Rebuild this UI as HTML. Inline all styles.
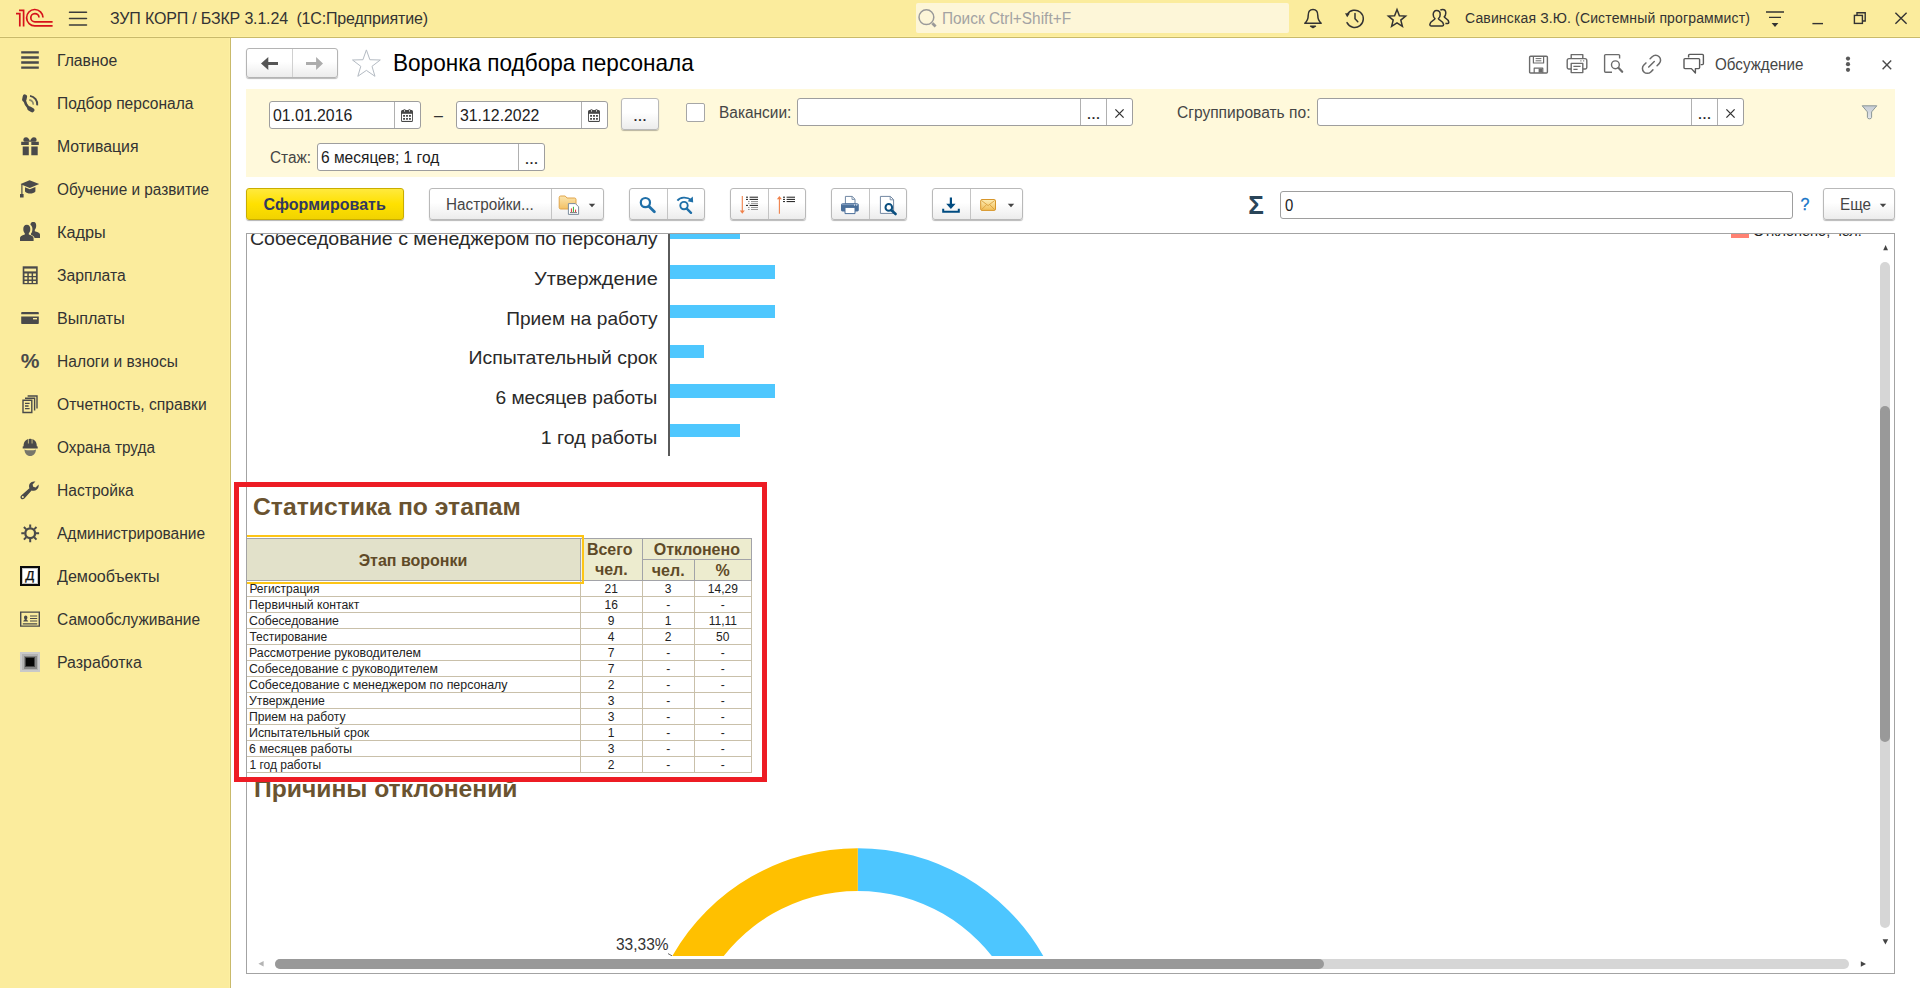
<!DOCTYPE html>
<html lang="ru">
<head>
<meta charset="utf-8">
<title>Воронка подбора персонала</title>
<style>
*{box-sizing:border-box;margin:0;padding:0}
html,body{width:1920px;height:988px;overflow:hidden;background:#fff}
body{font-family:"Liberation Sans",sans-serif;font-size:16px;color:#333;position:relative}
.abs{position:absolute}
#topbar{position:absolute;left:0;top:0;width:1920px;height:38px;background:#fbec9d;border-bottom:1px solid #c9ba6b;box-shadow:inset 0 -1px 0 #fef0a2}
#sidebar{position:absolute;left:0;top:38px;width:231px;height:950px;background:#fbec9d;border-right:1px solid #c9ba6b;box-shadow:inset -1px 0 0 #fef0a2}
.t{position:absolute;white-space:nowrap;line-height:20px;transform-origin:0 0}
.nav{position:absolute;left:57px;transform-origin:0 0;white-space:nowrap;line-height:20px;font-size:16px;color:#333}
.ico{position:absolute;left:20px;width:20px;height:20px}
.inp{position:absolute;background:#fff;border:1px solid #9e9e9e;border-radius:3px}
.btn{position:absolute;border:1px solid #b9b9b9;border-radius:3px;background:linear-gradient(#ffffff 0%,#ffffff 45%,#ececec 100%);box-shadow:0 1px 1px rgba(0,0,0,.28)}
.sep{position:absolute;width:1px;background:#c4c4c4}
.cl{position:absolute;right:1221.6px;white-space:nowrap;font-size:19px;line-height:28px;color:#2a2a2a;transform-origin:100% 0}
.h1{position:absolute;white-space:nowrap;font-size:24px;font-weight:bold;line-height:30px;color:#6a5330;transform:scaleX(1.02);transform-origin:0 0}
.th{position:absolute;width:120px;text-align:center;white-space:nowrap;font-size:16px;font-weight:bold;line-height:20px;color:#5f4a27}
.td{position:absolute;white-space:nowrap;font-size:12px;line-height:14px;color:#222;transform-origin:0 0}
.tn{position:absolute;width:50px;text-align:center;white-space:nowrap;font-size:12px;line-height:14px;color:#222}
</style>
</head>
<body>
<!-- TOP BAR -->
<div id="topbar">
<svg class="abs" style="left:14px;top:6px" width="42" height="24" viewBox="14 6 42 24" fill="none" stroke="#d6121b" stroke-width="1.7">
<path d="M16 13.6H19.8V26.6M19 10.3H23.6V26.6"/>
<path d="M43 17.6A8.2 8.2 0 1 0 35 25.9H52.6" stroke-linecap="butt"/>
<path d="M39 17.6A4.1 4.1 0 1 0 35 21.8H52.6"/>
</svg>
<svg class="abs" style="left:68px;top:10px" width="20" height="17" viewBox="0 0 20 17" stroke="#3b3b3b" stroke-width="1.5" stroke-linecap="round"><path d="M1.5 2.3H18.5M1.5 8.6H18.5M1.5 14.9H18.5"/></svg>
<div class="t" style="left:110px;top:9px;font-size:16px;letter-spacing:-0.17px;color:#333;white-space:pre">ЗУП КОРП / БЗКР 3.1.24  (1С:Предприятие)</div>
<div class="abs" style="left:916px;top:3px;width:373px;height:30px;background:#fdf6d8;border-radius:2px"></div>
<svg class="abs" style="left:917px;top:7px" width="22" height="22" viewBox="0 0 22 22" fill="none" stroke="#9a9a9a" stroke-width="1.5"><circle cx="9.4" cy="10.2" r="7.4"/><path d="M15.4 16.2L18.6 19.4" stroke-width="2.8"/></svg>
<div class="t" style="left:942px;top:9px;font-size:16px;transform:scaleX(.962);color:#a3a3a3">Поиск Ctrl+Shift+F</div>
<!-- bell -->
<svg class="abs" style="left:1302px;top:7px" width="22" height="23" viewBox="0 0 22 23" fill="none" stroke="#333" stroke-width="1.5" stroke-linejoin="round"><path d="M11 2.6C7.6 2.6 6.2 5.4 6.2 8.4C6.2 12.6 4.6 14.6 2.8 16.2H19.2C17.4 14.6 15.8 12.6 15.8 8.4C15.8 5.4 14.4 2.6 11 2.6Z"/><path d="M8.6 19.2H13.4L11 20.6Z" fill="#333"/></svg>
<!-- history -->
<svg class="abs" style="left:1343px;top:7px" width="24" height="23" viewBox="0 0 24 23" fill="none" stroke="#333" stroke-width="1.5"><path d="M4.2 7.6A8.6 8.6 0 1 1 4 15.6" stroke-linecap="round"/><path d="M12 6.4V11.8L14.8 14.8" stroke-linecap="round"/><path d="M2 6.2L6.8 6.4L4.2 10.2Z" fill="#333" stroke="none"/></svg>
<!-- star -->
<svg class="abs" style="left:1386px;top:7px" width="22" height="22" viewBox="0 0 22 22" fill="none" stroke="#333" stroke-width="1.5" stroke-linejoin="miter"><path d="M11 2.6L13.4 8.7L19.6 9.1L14.8 13.1L16.4 19.4L11 15.9L5.6 19.4L7.2 13.1L2.4 9.1L8.6 8.7Z"/></svg>
<!-- users -->
<svg class="abs" style="left:1428px;top:7px" width="23" height="22" viewBox="0 0 23 22" fill="none" stroke="#333" stroke-width="1.5" stroke-linejoin="round"><path d="M8.6 3.6C6.4 3.6 5.2 5.2 5.2 7.4C5.2 9.4 6 10.8 7 11.6C7 13.4 2 13.8 1.8 17.6C1.8 18.6 2.2 19 3 19H14.4C15.2 19 15.6 18.6 15.6 17.6C15.4 13.8 10.4 13.4 10.4 11.6C11.4 10.8 12.2 9.4 12.2 7.4C12.2 5.2 10.8 3.6 8.6 3.6Z"/><path d="M12.4 3.2C13 2.6 13.8 2.4 14.6 2.4C16.6 2.4 17.8 4 17.8 6C17.8 7.8 17.2 9 16.2 9.8C16.2 11.4 20.6 11.8 20.8 15.2C20.8 16 20.4 16.4 19.8 16.4H17.4"/></svg>
<div class="t" style="left:1465px;top:8px;font-size:14px;letter-spacing:0.14px;color:#333">Савинская З.Ю. (Системный программист)</div>
<!-- lines -->
<svg class="abs" style="left:1764px;top:9px" width="22" height="20" viewBox="0 0 22 20" fill="none" stroke="#333" stroke-width="1.4"><path d="M2 3H20M5 8.4H17"/><path d="M7.6 14L11 18L14.4 14Z" fill="#333" stroke="none"/></svg>
<svg class="abs" style="left:1810px;top:10px" width="16" height="16" viewBox="0 0 16 16" fill="none" stroke="#333" stroke-width="1.4"><path d="M2.4 13.6H13"/></svg>
<svg class="abs" style="left:1852px;top:10px" width="16" height="16" viewBox="0 0 16 16" fill="none" stroke="#333" stroke-width="1.4"><rect x="2.4" y="5.4" width="8" height="8" /><path d="M5 5.4V2.8H13.2V11H10.4"/></svg>
<svg class="abs" style="left:1893px;top:10px" width="16" height="16" viewBox="0 0 16 16" fill="none" stroke="#333" stroke-width="1.4"><path d="M2.4 2.8L13.6 13.8M13.6 2.8L2.4 13.8"/></svg>
</div>
<!-- SIDEBAR -->
<div id="sidebar">
<svg class="ico" style="top:12px" viewBox="0 0 20 20"><path d="M1.2 2.4H18.8M1.2 7.5H18.8M1.2 12.5H18.8M1.2 17.6H18.8" stroke="#4a4a4a" stroke-width="2.3" fill="none"/></svg>
<div class="nav" style="top:13px;transform:scaleX(0.984)">Главное</div>
<svg class="ico" style="top:55px" viewBox="0 0 20 20"><path d="M4.6 3.4C3.6 8.6 7 14.8 12 17.4" stroke="#4a4a4a" stroke-width="2.6" fill="none" stroke-linecap="round"/><path d="M4.9 3.6L4.3 6.6M9.6 15.6L12.2 17.2" stroke="#4a4a4a" stroke-width="4.4" fill="none" stroke-linecap="round"/><path d="M10 2.9A8.4 8.4 0 0 1 17.2 12.4" stroke="#4a4a4a" stroke-width="1.9" fill="none"/><path d="M9.2 6.8A4.6 4.6 0 0 1 13.2 11.6" stroke="#8c8a6c" stroke-width="1.7" fill="none"/></svg>
<div class="nav" style="top:56px;transform:scaleX(0.973)">Подбор персонала</div>
<svg class="ico" style="top:98px" viewBox="0 0 20 20"><path d="M1.2 5.7H8.8V9.1H1.2ZM11.3 5.7H18.8V9.1H11.3ZM2.7 10.5H8.8V19.2H2.7ZM11.3 10.5H17.7V19.2H11.3Z" fill="#4a4a4a"/><path d="M9.6 5.7H4.6C2.6 4.8 3 1.2 6 1.2C8 1.2 9.4 3.4 10 5.2C10.6 3.4 12 1.2 14 1.2C17 1.2 17.4 4.8 15.4 5.7H10.4Z" fill="#4a4a4a"/></svg>
<div class="nav" style="top:99px;transform:scaleX(0.99)">Мотивация</div>
<svg class="ico" style="top:141px" viewBox="0 0 20 20"><path d="M9.6 1.2L19.2 5L9.8 9L2.5 6V15H3.6V18.5H0V15H1.3V5.6L0.6 5Z" fill="#4a4a4a"/><path d="M5 8.3L9.8 10.3L15.4 8V12.4C14.2 13.9 12.2 14.5 10.2 14.5C8.2 14.5 6.2 13.9 5 12.4Z" fill="#4a4a4a"/></svg>
<div class="nav" style="top:142px;transform:scaleX(0.959)">Обучение и развитие</div>
<svg class="ico" style="top:184px" viewBox="0 0 20 20"><path d="M13.2 -0.2C15.2 -0.2 16.2 1.4 16.2 3.6C16.2 5.6 15.6 7 14.8 7.8V9.2C16.6 9.8 19.6 10.2 20 12.4V16H14.6C14.2 14.4 12.4 13.4 11 12.8V11.6C12 10.4 12.4 8.8 12.4 7C12.4 5 11.6 3.6 10.4 2.8C10.6 0.8 11.6 -0.2 13.2 -0.2Z" fill="#4a4a4a"/><path d="M6.8 2.7C9.2 2.7 10.3 4.5 10.3 6.9C10.3 8.9 9.7 10.4 8.8 11.3V12.6C10.4 13.4 13.4 13.6 13.6 16.4V18.9H0V16.4C0.2 13.6 3.2 13.4 4.8 12.6V11.3C3.9 10.4 3.3 8.9 3.3 6.9C3.3 4.5 4.4 2.7 6.8 2.7Z" fill="#4a4a4a"/></svg>
<div class="nav" style="top:185px;transform:scaleX(1.017)">Кадры</div>
<svg class="ico" style="top:227px" viewBox="0 0 20 20"><path d="M2.7 1.3H17.7V19.2H2.7Z" fill="#4a4a4a"/><path d="M4.3 3.6H16.1V6.4H4.3Z" fill="#fbec9d"/><path d="M4.5 8.6H7.3V10.9H4.5ZM8.8 8.6H11.6V10.9H8.8ZM13.1 8.6H15.9V10.9H13.1ZM4.5 12.3H7.3V14.6H4.5ZM8.8 12.3H11.6V14.6H8.8ZM13.1 12.3H15.9V14.6H13.1ZM4.5 16H7.3V17.9H4.5ZM8.8 16H11.6V17.9H8.8ZM13.1 16H15.9V17.9H13.1Z" fill="#fbec9d"/></svg>
<div class="nav" style="top:228px;transform:scaleX(0.981)">Зарплата</div>
<svg class="ico" style="top:270px" viewBox="0 0 20 20"><path d="M1.2 4.9C1.2 4.3 1.6 3.9 2.2 3.9H17.8C18.4 3.9 18.8 4.3 18.8 4.9V6.2H1.2ZM1.2 8.5H18.8V14.9C18.8 15.5 18.4 15.9 17.8 15.9H2.2C1.6 15.9 1.2 15.5 1.2 14.9Z" fill="#4a4a4a"/><path d="M13 10H17V11.4H13Z" fill="#fbec9d"/></svg>
<div class="nav" style="top:271px;transform:scaleX(1.003)">Выплаты</div>
<div class="t" style="left:20px;top:312px;width:20px;text-align:center;font-size:21px;font-weight:bold;line-height:22px;color:#4a4a4a">%</div>
<div class="nav" style="top:314px;transform:scaleX(0.972)">Налоги и взносы</div>
<svg class="ico" style="top:356px" viewBox="0 0 20 20"><path d="M7.6 2H17V14.4M5 4.2H14.6V16.6" stroke="#4a4a4a" stroke-width="1.4" fill="none"/><path d="M3 6.2H11.8V18.5H3Z" stroke="#4a4a4a" stroke-width="1.4" fill="none"/><path d="M5 9.3H9.6M5 12H8.6M5 14.6H9.6" stroke="#4a4a4a" stroke-width="1.3"/></svg>
<div class="nav" style="top:357px;transform:scaleX(0.978)">Отчетность, справки</div>
<svg class="ico" style="top:399px" viewBox="0 0 20 20"><path d="M3.6 9.2C3.6 4.6 6.2 1.8 10.2 1.8C14.2 1.8 16.8 4.6 16.8 9.2L17.7 9.6V11.4H2.7V9.6Z" fill="#4a4a4a"/><path d="M7.9 1.6H8.8V6.4H7.9ZM11.6 1.6H12.5V6.4H11.6Z" fill="#fbec9d" opacity=".75"/><path d="M4.4 12.4C7.4 13.6 13 13.6 16 12.4C15.8 16.2 13.4 19 10.2 19C7 19 4.6 16.2 4.4 12.4Z" fill="#77766a"/></svg>
<div class="nav" style="top:400px;transform:scaleX(0.961)">Охрана труда</div>
<svg class="ico" style="top:442px" viewBox="0 0 20 20"><path d="M18.6 4.4L15.6 7.4L13.2 6.8L12.6 4.4L15.4 1.6C13.4 1 11.2 1.6 9.9 3.4C8.9 4.8 8.8 6.6 9.4 8.2L1.2 15.4C0.2 16.3 0.2 17.8 1.1 18.7C2 19.6 3.5 19.5 4.4 18.5L11.6 10.6C13.2 11.2 15.2 10.8 16.8 9.4C18.4 8 19 6.2 18.6 4.4Z" fill="#4a4a4a"/><circle cx="2.8" cy="17" r="1" fill="#fbec9d"/></svg>
<div class="nav" style="top:443px;transform:scaleX(0.975)">Настройка</div>
<svg class="ico" style="top:485px" viewBox="0 0 20 20"><circle cx="10.2" cy="10.3" r="4.9" fill="none" stroke="#4a4a4a" stroke-width="2.3"/><path d="M15.80 10.30L19.10 10.30M14.16 14.26L16.49 16.59M10.20 15.90L10.20 19.20M6.24 14.26L3.91 16.59M4.60 10.30L1.30 10.30M6.24 6.34L3.91 4.01M10.20 4.70L10.20 1.40M14.16 6.34L16.49 4.01" stroke="#4a4a4a" stroke-width="2" fill="none"/></svg>
<div class="nav" style="top:486px;transform:scaleX(0.971)">Администрирование</div>
<div class="abs" style="left:20px;top:528px;width:20px;height:20px;border:2px solid #0a0a0a;background:#fff;box-shadow:inset 0 0 0 1px #c4c4c4"></div><div class="t" style="left:20px;top:527.5px;width:20px;text-align:center;font-size:13px;line-height:20px;color:#111;-webkit-text-stroke:.3px #111;transform:skewX(-5deg);transform-origin:50% 50%">Д</div>
<div class="nav" style="top:529px;transform:scaleX(1.006)">Демообъекты</div>
<svg class="ico" style="top:571px" viewBox="0 0 20 20"><path d="M0.7 3.1H19.3V17.1H0.7Z" fill="none" stroke="#4a4a4a" stroke-width="1.4"/><path d="M3.2 12.4C3.4 11 4.6 11.2 4.8 10.4C4.2 9.8 4 9.2 4 8.4C4 7.2 4.7 6.4 5.7 6.4C6.7 6.4 7.4 7.2 7.4 8.4C7.4 9.2 7.2 9.8 6.6 10.4C6.8 11.2 8 11 8.2 12.4Z" fill="#4a4a4a"/><path d="M10 7H17.2M10 9.5H17.2M10 12H17.2M2.8 14.8H17.2" stroke="#4a4a4a" stroke-width="1.2"/></svg>
<div class="nav" style="top:572px;transform:scaleX(0.97)">Самообслуживание</div>
<div class="abs" style="left:20px;top:614px;width:20px;height:20px;background:#c9c9c9"></div><div class="abs" style="left:22px;top:616px;width:16px;height:16px;background:#b2b2b2"></div><div class="abs" style="left:23.5px;top:617.5px;width:13px;height:13px;background:#858585"></div><div class="abs" style="left:25px;top:619px;width:10px;height:10px;background:#454545"></div><div class="abs" style="left:26px;top:620px;width:8px;height:8px;background:#060606"></div>
<div class="nav" style="top:615px;transform:scaleX(0.994)">Разработка</div>
</div>
<!-- CONTENT HEADER -->
<div id="content">
<div class="btn" style="left:246px;top:48px;width:92px;height:30px;border-color:#b4b4b4"></div>
<div class="sep" style="left:292px;top:49px;height:28px;background:#d0d0d0"></div>
<svg class="abs" style="left:256px;top:54px" width="28" height="20" viewBox="256 54 28 20"><path d="M261 63.5L268.3 57.1V62H278V65H268.3V69.9Z" fill="#555"/></svg>
<svg class="abs" style="left:300px;top:54px" width="28" height="20" viewBox="300 54 28 20"><path d="M323 63.5L316.1 57.1V62H306V65H316.1V69.9Z" fill="#acacac"/></svg>
<svg class="abs" style="left:348px;top:46px" width="38" height="36" viewBox="348 46 38 36" fill="none" stroke="#b4bbc3" stroke-width="1"><path d="M366.40 49.90L369.87 59.73L380.29 59.99L372.01 66.32L374.98 76.31L366.40 70.40L357.82 76.31L360.79 66.32L352.51 59.99L362.93 59.73Z"/></svg>
<div class="t" style="left:393px;top:49px;font-size:24px;line-height:28px;color:#000;transform:scaleX(.94)">Воронка подбора персонала</div>
<!-- header right icons -->
<svg class="abs" style="left:1527px;top:53px" width="23" height="23" viewBox="0 0 23 23" fill="none" stroke="#6b6b6b" stroke-width="1.4" stroke-linejoin="round"><path d="M2.6 4.2C2.6 3.6 3 3.2 3.6 3.2H19.4C20 3.2 20.4 3.6 20.4 4.2V19C20.4 19.6 20 20 19.4 20H3.6C3 20 2.6 19.6 2.6 19Z"/><path d="M6.4 3.4V10H16.6V3.4" stroke-width="1.2"/><path d="M8.6 5.6H14.4M8.6 7.8H14.4" stroke-width="1"/><path d="M7.2 20V15.2H15.8V20" stroke-width="1.2"/><path d="M11.6 15.6H15.2V19.6H11.6Z" fill="#6b6b6b" stroke="none"/></svg>
<svg class="abs" style="left:1565px;top:52px" width="24" height="23" viewBox="0 0 24 23" fill="none" stroke="#6b6b6b" stroke-width="1.4" stroke-linejoin="round"><path d="M6.2 6.6V2.6H17.8V6.6"/><path d="M6 17H3.6C2.8 17 2.2 16.4 2.2 15.6V8.4C2.2 7.4 3 6.6 4 6.6H20C21 6.6 21.8 7.4 21.8 8.4V15.6C21.8 16.4 21.2 17 20.4 17H18"/><path d="M6.2 11.4H17.8V20.6H6.2Z"/><path d="M8.4 14.4H15.6M8.4 17.4H12.6" stroke-width="1.2"/><path d="M15.4 8.8H16.4M18.2 8.8H19.2" stroke-width="1.2"/></svg>
<svg class="abs" style="left:1602px;top:52px" width="23" height="23" viewBox="0 0 23 23" fill="none" stroke="#6b6b6b" stroke-width="1.4" stroke-linejoin="round"><path d="M17.6 6.4V3.6C17.6 3 17.2 2.6 16.6 2.6H3.6C3 2.6 2.6 3 2.6 3.6V19.2C2.6 19.8 3 20.2 3.6 20.2H10"/><circle cx="13.4" cy="12.8" r="3.9"/><path d="M16.4 15.8L20.2 19.8" stroke-width="2.2" stroke-linecap="round"/></svg>
<svg class="abs" style="left:1640px;top:53px" width="23" height="23" viewBox="1640 53 23 23" fill="none" stroke="#6b6b6b" stroke-width="1.55" stroke-linecap="round"><g transform="translate(1651.5,64.3) rotate(-45) scale(.98) translate(-12,-12)"><path d="M15 7h3a5 5 0 0 1 0 10h-3"/><path d="M9 17H6a5 5 0 0 1 0-10h3"/><path d="M8 12H16"/></g></svg>
<svg class="abs" style="left:1682px;top:52px" width="24" height="24" viewBox="0 0 24 24" fill="none" stroke="#5a5a5a" stroke-width="1.4" stroke-linejoin="round"><path d="M6.6 5.6V3.4C6.6 2.8 7 2.4 7.6 2.4H20.4C21 2.4 21.4 2.8 21.4 3.4V11.6C21.4 12.2 21 12.6 20.4 12.6H18.6"/><path d="M3 6.6H16.6C17.2 6.6 17.6 7 17.6 7.6V15.6C17.6 16.2 17.2 16.6 16.6 16.6H13.4V21L9.4 16.6H3C2.4 16.6 2 16.2 2 15.6V7.6C2 7 2.4 6.6 3 6.6Z"/></svg>
<div class="t" style="left:1715px;top:55px;font-size:16px;transform:scaleX(.948);color:#454545">Обсуждение</div>
<svg class="abs" style="left:1843px;top:55px" width="10" height="18" viewBox="0 0 10 18" fill="#595959"><circle cx="5" cy="3.6" r="2.1"/><circle cx="5" cy="9.2" r="2.1"/><circle cx="5" cy="14.8" r="2.1"/></svg>
<svg class="abs" style="left:1880px;top:58px" width="14" height="14" viewBox="0 0 14 14" fill="none" stroke="#4a4a4a" stroke-width="1.4"><path d="M2.6 2.6L11.2 11.2M11.2 2.6L2.6 11.2"/></svg>
</div>
<!-- FILTER PANEL -->
<div class="abs" style="left:246px;top:89px;width:1649px;height:88px;background:#fff9db"></div>
<!-- date 1 -->
<div class="inp" style="left:269px;top:101px;width:152px;height:28px"></div>
<div class="sep" style="left:394px;top:102px;height:26px;background:#b0b0b0"></div>
<div class="t" style="left:273px;top:106px;font-size:16px;color:#1c1c1c;transform:scaleX(.99)">01.01.2016</div>
<svg class="abs cal" style="left:400px;top:108px" width="14" height="15" viewBox="0 0 14 15"><path d="M1 3.6C1 2.6 1.8 2 2.6 2H11.4C12.2 2 13 2.6 13 3.6V12.4C13 13.2 12.4 13.9 11.6 13.9H2.4C1.6 13.9 1 13.2 1 12.4Z" fill="#474747"/><path d="M3.5 1.9C3.5 0.7 5.5 0.7 5.5 1.9V4H3.5ZM8.5 1.9C8.5 0.7 10.5 0.7 10.5 1.9V4H8.5Z" fill="#474747"/><path d="M4.15 1.9C4.15 1.5 4.85 1.5 4.85 1.9V3.7H4.15ZM9.15 1.9C9.15 1.5 9.85 1.5 9.85 1.9V3.7H9.15Z" fill="#fff"/><path d="M1.9 5.8H12.1V12.9H1.9Z" fill="#fff"/><path d="M3.2 7.1H4.9V8.8H3.2ZM6.15 7.1H7.85V8.8H6.15ZM9.1 7.1H10.8V8.8H9.1ZM3.2 10.1H4.9V11.8H3.2ZM6.15 10.1H7.85V11.8H6.15ZM9.1 10.1H10.8V11.8H9.1Z" fill="#333"/></svg>
<div class="t" style="left:434px;top:106px;font-size:16px;color:#333">–</div>
<!-- date 2 -->
<div class="inp" style="left:456px;top:101px;width:152px;height:28px"></div>
<div class="sep" style="left:581px;top:102px;height:26px;background:#b0b0b0"></div>
<div class="t" style="left:460px;top:106px;font-size:16px;color:#1c1c1c;transform:scaleX(.99)">31.12.2022</div>
<svg class="abs cal" style="left:587px;top:108px" width="14" height="15" viewBox="0 0 14 15"><path d="M1 3.6C1 2.6 1.8 2 2.6 2H11.4C12.2 2 13 2.6 13 3.6V12.4C13 13.2 12.4 13.9 11.6 13.9H2.4C1.6 13.9 1 13.2 1 12.4Z" fill="#474747"/><path d="M3.5 1.9C3.5 0.7 5.5 0.7 5.5 1.9V4H3.5ZM8.5 1.9C8.5 0.7 10.5 0.7 10.5 1.9V4H8.5Z" fill="#474747"/><path d="M4.15 1.9C4.15 1.5 4.85 1.5 4.85 1.9V3.7H4.15ZM9.15 1.9C9.15 1.5 9.85 1.5 9.85 1.9V3.7H9.15Z" fill="#fff"/><path d="M1.9 5.8H12.1V12.9H1.9Z" fill="#fff"/><path d="M3.2 7.1H4.9V8.8H3.2ZM6.15 7.1H7.85V8.8H6.15ZM9.1 7.1H10.8V8.8H9.1ZM3.2 10.1H4.9V11.8H3.2ZM6.15 10.1H7.85V11.8H6.15ZM9.1 10.1H10.8V11.8H9.1Z" fill="#333"/></svg>
<!-- ... button -->
<div class="btn" style="left:621px;top:98px;width:38px;height:32px"></div>
<div class="t" style="left:621px;top:106px;width:38px;text-align:center;font-size:16px;color:#1a1a1a;-webkit-text-stroke:.2px #1a1a1a">...</div>
<!-- checkbox -->
<div class="abs" style="left:686px;top:103px;width:19px;height:19px;background:#fff;border:1px solid #a6a6a6;border-radius:2px"></div>
<div class="t" style="left:719px;top:103px;font-size:16px;color:#454545;transform:scaleX(.965)">Вакансии:</div>
<!-- vacancy input -->
<div class="inp" style="left:797px;top:98px;width:336px;height:28px"></div>
<div class="sep" style="left:1080px;top:99px;height:26px;background:#b0b0b0"></div>
<div class="sep" style="left:1106px;top:99px;height:26px;background:#b0b0b0"></div>
<div class="t" style="left:1081px;top:104px;width:25px;text-align:center;font-size:16px;color:#1a1a1a;-webkit-text-stroke:.2px #1a1a1a">...</div>
<svg class="abs" style="left:1113px;top:107px" width="13" height="13" viewBox="0 0 13 13" fill="none" stroke="#333" stroke-width="1.3"><path d="M2.4 2.4L10.6 10.6M10.6 2.4L2.4 10.6"/></svg>
<div class="t" style="left:1177px;top:103px;font-size:16px;color:#454545;transform:scaleX(.973)">Сгруппировать по:</div>
<!-- group input -->
<div class="inp" style="left:1317px;top:98px;width:427px;height:28px"></div>
<div class="sep" style="left:1691px;top:99px;height:26px;background:#b0b0b0"></div>
<div class="sep" style="left:1717px;top:99px;height:26px;background:#b0b0b0"></div>
<div class="t" style="left:1692px;top:104px;width:25px;text-align:center;font-size:16px;color:#1a1a1a;-webkit-text-stroke:.2px #1a1a1a">...</div>
<svg class="abs" style="left:1724px;top:107px" width="13" height="13" viewBox="0 0 13 13" fill="none" stroke="#333" stroke-width="1.3"><path d="M2.4 2.4L10.6 10.6M10.6 2.4L2.4 10.6"/></svg>
<!-- funnel -->
<svg class="abs" style="left:1860px;top:104px" width="19" height="17" viewBox="0 0 19 17"><defs><linearGradient id="fu" x1="0" y1="0" x2="0" y2="1"><stop offset="0" stop-color="#c6ccd4"/><stop offset="1" stop-color="#e4e7eb"/></linearGradient></defs><path d="M2.2 1.8H16.8L11.6 7.9V13.4C11.6 15.3 7.4 15.3 7.4 13.4V7.9Z" fill="url(#fu)" stroke="#8c9898" stroke-width="1" stroke-linejoin="round"/></svg>
<!-- row 2 -->
<div class="t" style="left:269.5px;top:148px;font-size:16px;color:#454545;transform:scaleX(.96)">Стаж:</div>
<div class="inp" style="left:317px;top:143px;width:228px;height:28px"></div>
<div class="sep" style="left:518px;top:144px;height:26px;background:#b0b0b0"></div>
<div class="t" style="left:321px;top:148px;font-size:16px;color:#1c1c1c;transform:scaleX(.97)">6 месяцев; 1 год</div>
<div class="t" style="left:519px;top:149px;width:25px;text-align:center;font-size:16px;color:#1a1a1a;-webkit-text-stroke:.2px #1a1a1a">...</div>
<!-- TOOLBAR -->
<div class="abs" style="left:246px;top:188px;width:158px;height:32px;border:1px solid #c9ad00;border-radius:3px;background:linear-gradient(#ffe93d 0%,#ffe100 50%,#f1d300 100%);box-shadow:0 1px 1px rgba(0,0,0,.3)"></div>
<div class="t" style="left:263.5px;top:195px;font-size:16px;font-weight:bold;color:#32385f;letter-spacing:0.04px">Сформировать</div>
<!-- settings group -->
<div class="btn" style="left:429px;top:188px;width:175px;height:32px"></div>
<div class="sep" style="left:551px;top:189px;height:30px"></div>
<div class="t" style="left:446px;top:195px;font-size:16px;color:#454545;transform:scaleX(.955)">Настройки...</div>
<svg class="abs" style="left:557px;top:193px" width="24" height="24" viewBox="557 193 24 24">
<defs><linearGradient id="fg" x1="0" y1="0" x2="0" y2="1"><stop offset="0" stop-color="#fbe6b0"/><stop offset="1" stop-color="#f3c063"/></linearGradient></defs>
<path d="M559.2 197.4C559.2 196.6 559.8 196 560.6 196H565.2L567 198H574.6C575.4 198 576 198.6 576 199.4V207.6C576 208.4 575.4 209 574.6 209H560.6C559.8 209 559.2 208.4 559.2 207.6Z" fill="url(#fg)" stroke="#e0a44a" stroke-width="1"/>
<path d="M568.4 203.6H575.4L578.6 206.8V214.4H568.4Z" fill="#fff" stroke="#7c8c9c" stroke-width="1" stroke-linejoin="round"/>
<path d="M571.4 212V208.4M573.4 212V206.6M575.4 212V209.4" stroke-width="1"/><path d="M571.4 212V208.4" stroke="#d33"/><path d="M573.4 212V206.8" stroke="#3a3"/><path d="M575.6 212V209.6" stroke="#d33"/><path d="M570 212.6H577" stroke="#555" stroke-width=".8"/>
</svg>
<svg class="abs" style="left:588px;top:203px" width="8" height="5" viewBox="0 0 8 5"><path d="M0.8 0.8H7.2L4 4.2Z" fill="#444"/></svg>
<!-- search group -->
<div class="btn" style="left:629px;top:188px;width:76px;height:32px"></div>
<div class="sep" style="left:667px;top:189px;height:30px"></div>
<svg class="abs" style="left:636px;top:193px" width="24" height="24" viewBox="636 193 24 24" fill="none" stroke="#1f6fa8"><circle cx="645.4" cy="202.6" r="4.6" stroke-width="2.2"/><path d="M648.8 206.2L654.4 211.8" stroke-width="2.8" stroke-linecap="round"/></svg>
<svg class="abs" style="left:674px;top:193px" width="24" height="24" viewBox="674 193 24 24" fill="none" stroke="#1f6fa8"><circle cx="684" cy="205.6" r="3.7" stroke-width="1.9"/><path d="M686.8 208.6L691 212.8" stroke-width="2.4" stroke-linecap="round"/><path d="M677.4 200.6C680 197.2 686.6 196.4 691.4 200" stroke-width="1.9"/><path d="M692.8 196.6L693.2 202.4L687.6 201.2Z" fill="#1f6fa8" stroke="none"/></svg>
<!-- expand group -->
<div class="btn" style="left:730px;top:188px;width:76px;height:32px"></div>
<div class="sep" style="left:768px;top:189px;height:30px"></div>
<svg class="abs" style="left:738px;top:194px" width="24" height="22" viewBox="738 194 24 22"><path d="M742.3 196V211.4" stroke="#f0814a" stroke-width="1.1"/><path d="M739.8 210.6H744.8L742.3 213.8Z" fill="#f0814a"/><path d="M746 197.2H748M749.6 197.2H758M746 199.4H748M749.6 199.4H758M746 205.4H748M749.6 205.4H758" stroke="#1a1a1a" stroke-width="1"/><path d="M748 201.5H749.6M751 201.5H758M748 203.4H749.6M751 203.4H758M748 207.5H749.6M751 207.5H758M748 209.5H749.6M751 209.5H758" stroke="#9a9a9a" stroke-width="1"/></svg>
<svg class="abs" style="left:776px;top:194px" width="24" height="22" viewBox="776 194 24 22"><path d="M779.4 198.4V213.8" stroke="#f0814a" stroke-width="1.1"/><path d="M776.9 199.2H781.9L779.4 196Z" fill="#f0814a"/><path d="M783 197.2H785M786.6 197.2H795M783 199.4H785M786.6 199.4H795M783 201.6H785M786.6 201.6H795" stroke="#1a1a1a" stroke-width="1"/></svg>
<!-- print group -->
<div class="btn" style="left:831px;top:188px;width:76px;height:32px"></div>
<div class="sep" style="left:869px;top:189px;height:30px"></div>
<svg class="abs" style="left:839px;top:194px" width="22" height="22" viewBox="839 194 22 22"><path d="M845.4 196.4H852.2L855 199.2V204H845.4Z" fill="#fff" stroke="#6f87a3" stroke-width="1"/><path d="M852 196.6V199.4H854.8" fill="none" stroke="#6f87a3" stroke-width=".9"/><path d="M841 205C841 204 841.8 203.2 842.8 203.2H857C858 203.2 858.8 204 858.8 205V210C858.8 210.8 858.2 211.4 857.4 211.4H842.4C841.6 211.4 841 210.8 841 210Z" fill="#4a6f9a"/><path d="M841.6 204.6H858.2" stroke="#7f9cbd" stroke-width="1"/><path d="M845 207.4H855V213.6H845Z" fill="#fff" stroke="#4a6f9a" stroke-width="1"/><path d="M854 205H855M856.2 205H857.2" stroke="#fff" stroke-width="1"/></svg>
<svg class="abs" style="left:877px;top:194px" width="22" height="22" viewBox="877 194 22 22"><path d="M880.4 196.4H890.4L893.6 199.6V213.4H880.4Z" fill="#fff" stroke="#7187a1" stroke-width="1"/><path d="M890.2 196.6V199.8H893.4" fill="none" stroke="#7187a1" stroke-width=".9"/><circle cx="888.8" cy="207.4" r="3.3" fill="#fff" stroke="#0b4f7f" stroke-width="2"/><path d="M891.4 210.2L895.6 214" stroke="#0b4f7f" stroke-width="2.6" stroke-linecap="round"/></svg>
<!-- save/mail group -->
<div class="btn" style="left:932px;top:188px;width:91px;height:32px"></div>
<div class="sep" style="left:970px;top:189px;height:30px"></div>
<svg class="abs" style="left:940px;top:195px" width="22" height="20" viewBox="940 195 22 20"><path d="M949.8 197.4H952V203.8H955.6L950.9 209L946.2 203.8H949.8Z" fill="#004b80"/><path d="M943.2 208.8V211.7H958.8V208.8" fill="none" stroke="#004b80" stroke-width="2"/></svg>
<svg class="abs" style="left:979px;top:198px" width="18" height="14" viewBox="979 198 18 14"><defs><linearGradient id="mg" x1="0" y1="0" x2="0" y2="1"><stop offset="0" stop-color="#fdeeb8"/><stop offset="1" stop-color="#f1bd55"/></linearGradient></defs><rect x="980.7" y="199.5" width="14.8" height="10.9" rx="1.2" fill="url(#mg)" stroke="#d7962b" stroke-width="1"/><path d="M981.4 200.4L988.1 205.6L994.8 200.4M981.4 209.8L986.6 204.6M994.8 209.8L989.6 204.6" fill="none" stroke="#d9a040" stroke-width=".9"/></svg>
<svg class="abs" style="left:1007px;top:203px" width="8" height="5" viewBox="0 0 8 5"><path d="M0.8 0.8H7.2L4 4.2Z" fill="#444"/></svg>
<!-- sigma -->
<div class="t" style="left:1246px;top:191px;width:20px;text-align:center;font-size:26px;font-weight:bold;line-height:28px;color:#2a4559">Σ</div>
<div class="inp" style="left:1280px;top:191px;width:513px;height:28px"></div>
<div class="t" style="left:1284.5px;top:196px;font-size:16px;color:#222;transform:scaleX(.93)">0</div>
<div class="t" style="left:1800.5px;top:195px;font-size:16px;color:#1775c8;-webkit-text-stroke:.3px #1775c8">?</div>
<div class="btn" style="left:1823px;top:188px;width:72px;height:32px"></div>
<div class="t" style="left:1839.6px;top:195px;font-size:16px;color:#454545;transform:scaleX(.95)">Еще</div>
<svg class="abs" style="left:1879px;top:203px" width="8" height="5" viewBox="0 0 8 5"><path d="M0.8 0.8H7.2L4 4.2Z" fill="#444"/></svg>
<!-- REPORT AREA -->
<div id="report" style="position:absolute;left:246px;top:233px;width:1649px;height:741px;border:1px solid #a3a3a3;background:#fff;overflow:hidden">
<div id="view" style="position:absolute;left:0;top:0;width:1632px;height:722px;overflow:hidden">
<div class="cl" style="top:-8.65px;transform:scaleX(1.028)">Собеседование с менеджером по персоналу</div>
<div style="position:absolute;left:422.6px;top:-8.45px;width:70.2px;height:13.4px;background:#4ec7fe"></div>
<div class="cl" style="top:31.0px;transform:scaleX(1.05)">Утверждение</div>
<div style="position:absolute;left:422.6px;top:31.2px;width:105.6px;height:13.4px;background:#4ec7fe"></div>
<div class="cl" style="top:70.65px;transform:scaleX(1.005)">Прием на работу</div>
<div style="position:absolute;left:422.6px;top:70.85px;width:105.6px;height:13.4px;background:#4ec7fe"></div>
<div class="cl" style="top:110.3px;transform:scaleX(1.025)">Испытательный срок</div>
<div style="position:absolute;left:422.6px;top:110.5px;width:34.8px;height:13.4px;background:#4ec7fe"></div>
<div class="cl" style="top:149.95px;transform:scaleX(1.01)">6 месяцев работы</div>
<div style="position:absolute;left:422.6px;top:150.15px;width:105.6px;height:13.4px;background:#4ec7fe"></div>
<div class="cl" style="top:189.6px;transform:scaleX(1.028)">1 год работы</div>
<div style="position:absolute;left:422.6px;top:189.8px;width:70.2px;height:13.4px;background:#4ec7fe"></div>
<div style="position:absolute;left:421px;top:0;width:1.6px;height:222.4px;background:#5a5a5a"></div>
<div style="position:absolute;left:1484px;top:-14px;width:18px;height:17.8px;background:#ff8273"></div>
<div class="t" style="left:1505.8px;top:-13.3px;font-size:15px;line-height:20px;color:#222;transform:scaleX(.965)">Отклонено, чел.</div>
<div class="h1" style="left:6.2px;top:258px;transform:scaleX(1.029)">Статистика по этапам</div>
<div style="position:absolute;left:0px;top:304px;width:505px;height:43px;background:#edeccf"></div>
<div style="position:absolute;left:0px;top:304px;width:333px;height:43px;background:#e2e1ca"></div>
<div style="position:absolute;left:334px;top:303px;width:1px;height:45px;background:#f4f3e4"></div>
<div style="position:absolute;left:0px;top:304px;width:505px;height:1px;background:#a2a3a8"></div>
<div style="position:absolute;left:0px;top:346px;width:505px;height:1px;background:#a2a3a8"></div>
<div style="position:absolute;left:396px;top:325px;width:109px;height:1px;background:#a2a3a8"></div>
<div style="position:absolute;left:333px;top:304px;width:1px;height:43px;background:#a2a3a8"></div>
<div style="position:absolute;left:395px;top:304px;width:1px;height:43px;background:#a2a3a8"></div>
<div style="position:absolute;left:504px;top:304px;width:1px;height:43px;background:#a2a3a8"></div>
<div style="position:absolute;left:447px;top:325px;width:1px;height:22px;background:#a2a3a8"></div>
<div class="th" style="left:106px;top:316.8px;">Этап воронки</div>
<div class="th" style="left:302.7px;top:306.3px;">Всего</div>
<div class="th" style="left:304.3px;top:326.3px;">чел.</div>
<div class="th" style="left:389.8px;top:306.3px;">Отклонено</div>
<div class="th" style="left:361.2px;top:327.3px;">чел.</div>
<div class="th" style="left:415.6px;top:327.3px;">%</div>
<div style="position:absolute;left:0px;top:362px;width:505px;height:1px;background:#c9c0aa"></div>
<div class="td" style="left:2.4px;top:348px;transform:scaleX(1.0)">Регистрация</div>
<div class="tn" style="left:339.2px;top:348px">21</div>
<div class="tn" style="left:396.2px;top:348px">3</div>
<div class="tn" style="left:450.8px;top:348px">14,29</div>
<div style="position:absolute;left:0px;top:378px;width:505px;height:1px;background:#c9c0aa"></div>
<div class="td" style="left:2.4px;top:364px;transform:scaleX(1.02)">Первичный контакт</div>
<div class="tn" style="left:339.2px;top:364px">16</div>
<div class="tn" style="left:396.2px;top:364px">-</div>
<div class="tn" style="left:450.8px;top:364px">-</div>
<div style="position:absolute;left:0px;top:394px;width:505px;height:1px;background:#c9c0aa"></div>
<div class="td" style="left:2.4px;top:380px;transform:scaleX(1.025)">Собеседование</div>
<div class="tn" style="left:339.2px;top:380px">9</div>
<div class="tn" style="left:396.2px;top:380px">1</div>
<div class="tn" style="left:450.8px;top:380px">11,11</div>
<div style="position:absolute;left:0px;top:410px;width:505px;height:1px;background:#c9c0aa"></div>
<div class="td" style="left:2.4px;top:396px;transform:scaleX(1.0)">Тестирование</div>
<div class="tn" style="left:339.2px;top:396px">4</div>
<div class="tn" style="left:396.2px;top:396px">2</div>
<div class="tn" style="left:450.8px;top:396px">50</div>
<div style="position:absolute;left:0px;top:426px;width:505px;height:1px;background:#c9c0aa"></div>
<div class="td" style="left:2.4px;top:412px;transform:scaleX(1.026)">Рассмотрение руководителем</div>
<div class="tn" style="left:339.2px;top:412px">7</div>
<div class="tn" style="left:396.2px;top:412px">-</div>
<div class="tn" style="left:450.8px;top:412px">-</div>
<div style="position:absolute;left:0px;top:442px;width:505px;height:1px;background:#c9c0aa"></div>
<div class="td" style="left:2.4px;top:428px;transform:scaleX(1.022)">Собеседование с руководителем</div>
<div class="tn" style="left:339.2px;top:428px">7</div>
<div class="tn" style="left:396.2px;top:428px">-</div>
<div class="tn" style="left:450.8px;top:428px">-</div>
<div style="position:absolute;left:0px;top:458px;width:505px;height:1px;background:#c9c0aa"></div>
<div class="td" style="left:2.4px;top:444px;transform:scaleX(1.032)">Собеседование с менеджером по персоналу</div>
<div class="tn" style="left:339.2px;top:444px">2</div>
<div class="tn" style="left:396.2px;top:444px">-</div>
<div class="tn" style="left:450.8px;top:444px">-</div>
<div style="position:absolute;left:0px;top:474px;width:505px;height:1px;background:#c9c0aa"></div>
<div class="td" style="left:2.4px;top:460px;transform:scaleX(1.02)">Утверждение</div>
<div class="tn" style="left:339.2px;top:460px">3</div>
<div class="tn" style="left:396.2px;top:460px">-</div>
<div class="tn" style="left:450.8px;top:460px">-</div>
<div style="position:absolute;left:0px;top:490px;width:505px;height:1px;background:#c9c0aa"></div>
<div class="td" style="left:2.4px;top:476px;transform:scaleX(1.014)">Прием на работу</div>
<div class="tn" style="left:339.2px;top:476px">3</div>
<div class="tn" style="left:396.2px;top:476px">-</div>
<div class="tn" style="left:450.8px;top:476px">-</div>
<div style="position:absolute;left:0px;top:506px;width:505px;height:1px;background:#c9c0aa"></div>
<div class="td" style="left:2.4px;top:492px;transform:scaleX(1.034)">Испытательный срок</div>
<div class="tn" style="left:339.2px;top:492px">1</div>
<div class="tn" style="left:396.2px;top:492px">-</div>
<div class="tn" style="left:450.8px;top:492px">-</div>
<div style="position:absolute;left:0px;top:522px;width:505px;height:1px;background:#c9c0aa"></div>
<div class="td" style="left:2.4px;top:508px;transform:scaleX(1.017)">6 месяцев работы</div>
<div class="tn" style="left:339.2px;top:508px">3</div>
<div class="tn" style="left:396.2px;top:508px">-</div>
<div class="tn" style="left:450.8px;top:508px">-</div>
<div style="position:absolute;left:0px;top:538px;width:505px;height:1px;background:#c9c0aa"></div>
<div class="td" style="left:2.4px;top:524px;transform:scaleX(1.0)">1 год работы</div>
<div class="tn" style="left:339.2px;top:524px">2</div>
<div class="tn" style="left:396.2px;top:524px">-</div>
<div class="tn" style="left:450.8px;top:524px">-</div>
<div style="position:absolute;left:333px;top:347px;width:1px;height:192px;background:#c9c0aa"></div>
<div style="position:absolute;left:395px;top:347px;width:1px;height:192px;background:#c9c0aa"></div>
<div style="position:absolute;left:447px;top:347px;width:1px;height:192px;background:#c9c0aa"></div>
<div style="position:absolute;left:504px;top:347px;width:1px;height:192px;background:#c9c0aa"></div>
<div style="position:absolute;left:-2px;top:301px;width:339px;height:49px;border:2px solid #fdc516"></div>
<div class="h1" style="left:6.6px;top:540.4px;transform:scaleX(1.027)">Причины отклонений</div>
<svg style="position:absolute;left:0;top:0" width="1632" height="722" viewBox="0 0 1632 722"><path d="M610.80 614.20A213.5 213.5 0 0 1 795.70 934.45L758.63 913.05A170.7 170.7 0 0 0 610.80 657.00Z" fill="#4dc6ff"/><path d="M425.90 934.45A213.5 213.5 0 0 1 610.80 614.20L610.80 657.00A170.7 170.7 0 0 0 462.97 913.05Z" fill="#ffc000"/><path d="M795.70 934.45A213.5 213.5 0 0 1 425.90 934.45L462.97 913.05A170.7 170.7 0 0 0 758.63 913.05Z" fill="#ff8273"/><path d="M421 719.6L425 721.8" stroke="#666" stroke-width="1"/></svg>
<div class="t" style="left:368.8px;top:701.3px;font-size:16px;line-height:20px;color:#333;transform:scaleX(.968)">33,33%</div>
</div>
<div style="position:absolute;left:1633px;top:28px;width:10px;height:666px;border-radius:5px;background:#d6d6d6"></div>
<div style="position:absolute;left:1633px;top:172px;width:10px;height:336.4px;border-radius:5px;background:#999"></div>
<svg style="position:absolute;left:1634px;top:9px" width="10" height="10" viewBox="0 0 10 10"><path d="M2.2 7.2L4.6 2L7 7.2Z" fill="#444"/></svg>
<svg style="position:absolute;left:1634px;top:703px" width="10" height="10" viewBox="0 0 10 10"><path d="M1.6 2.2L4.4 7.6L7.2 2.2Z" fill="#444"/></svg>
<div style="position:absolute;left:28px;top:724.6px;width:1574px;height:10.4px;border-radius:5.2px;background:#d6d6d6"></div>
<div style="position:absolute;left:28px;top:724.6px;width:1048.8px;height:10.4px;border-radius:5.2px;background:#999"></div>
<svg style="position:absolute;left:10px;top:725px" width="10" height="10" viewBox="0 0 10 10"><path d="M6.6 2L1.4 4.8L6.6 7.6Z" fill="#b4b4b4"/></svg>
<svg style="position:absolute;left:1612px;top:725px" width="10" height="10" viewBox="0 0 10 10"><path d="M1.8 2.2L7 5L1.8 7.8Z" fill="#444"/></svg>
</div>
<div style="position:absolute;left:234px;top:482px;width:533px;height:300px;border:5px solid #ed1c24"></div>
</body>
</html>
